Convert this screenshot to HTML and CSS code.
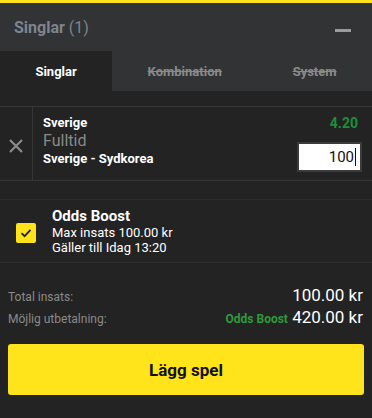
FILE: index.html
```html
<!DOCTYPE html>
<html lang="sv">
<head>
<meta charset="utf-8">
<link rel="stylesheet" href="styles.css">
</head>
<body>
<div class="slip">
  <div class="topbar"></div>
  <div class="header">
    <div class="title"><span class="title-main">Singlar</span> <span class="title-count">(1)</span></div>
    <div class="minus"></div>
  </div>
  <div class="tabs">
    <div class="tab active">Singlar</div>
    <div class="tab disabled">Kombination</div>
    <div class="tab disabled">System</div>
  </div>
  <div class="spacer"></div>
  <div class="bet">
    <div class="remove">
      <svg width="16" height="16" viewBox="0 0 16 16"><path d="M2 2 L14 14 M14 2 L2 14" stroke="#8b8b8b" stroke-width="2.2" fill="none"/></svg>
    </div>
    <div class="bet-body">
      <div class="bet-info">
        <div class="sel">Sverige</div>
        <div class="market">Fulltid</div>
        <div class="event">Sverige - Sydkorea</div>
      </div>
      <div class="bet-side">
        <div class="odds">4.20</div>
        <div class="stake"><span class="stake-val">100</span><span class="caret"></span></div>
      </div>
    </div>
  </div>
  <div class="spacer2"></div>
  <div class="boost">
    <div class="check">
      <svg width="14" height="14" viewBox="0 0 14 14"><path d="M2.5 7.2 L5.6 10.2 L11.5 3.8" stroke="#222" stroke-width="1.8" fill="none"/></svg>
    </div>
    <div class="boost-text">
      <div class="boost-title">Odds Boost</div>
      <div class="boost-line">Max insats 100.00 kr</div>
      <div class="boost-line">Gäller till Idag 13:20</div>
    </div>
  </div>
  <div class="totals">
    <div class="trow">
      <span class="tlabel">Total insats:</span>
      <span class="tval">100.00 kr</span>
    </div>
    <div class="trow">
      <span class="tlabel">Möjlig utbetalning:</span>
      <span class="tval"><span class="tboost">Odds Boost</span> 420.00 kr</span>
    </div>
  </div>
  <div class="actions">
    <button class="place">Lägg spel</button>
  </div>
</div>
</body>
</html>
```

FILE: styles.css
```css
html, body {
  margin: 0;
  padding: 0;
  background: #232323;
  font-family: Roboto, "Liberation Sans", Arial, sans-serif;
}
.slip {
  width: 372px;
  height: 418px;
  background: #232323;
  display: flex;
  flex-direction: column;
}
.topbar {
  height: 3px;
  background: #ffe31a;
}
.header {
  height: 48px;
  background: #323335;
  display: flex;
  align-items: center;
  justify-content: space-between;
  padding: 0 21px 0 14px;
}
.title {
  font-size: 16px;
  color: #7e858d;
}
.title-main {
  font-weight: 700;
}
.title-count {
  font-weight: 400;
}
.minus {
  width: 16px;
  height: 3px;
  background: #9b9b9b;
  margin-top: 6px;
}
.tabs {
  height: 40px;
  display: flex;
  background: #323335;
}
.tab {
  flex: 1 1 auto;
  display: flex;
  align-items: center;
  justify-content: center;
  font-size: 13px;
  font-weight: 700;
}
.tab.active {
  background: #232323;
  color: #ffffff;
}
.tab.disabled {
  color: #8a8a8a;
  text-decoration: line-through;
}
.spacer {
  height: 15px;
}
.bet {
  height: 73px;
  border-top: 1px solid #363636;
  border-bottom: 1px solid #363636;
  display: flex;
}
.remove {
  width: 33px;
  border-right: 1px solid #363636;
  display: flex;
  align-items: center;
  justify-content: center;
  padding-top: 5px;
  box-sizing: border-box;
}
.bet-body {
  flex: 1;
  display: flex;
  justify-content: space-between;
  padding: 8px 10px 0 10px;
}
.sel, .event {
  font-size: 13px;
  font-weight: 700;
  color: #ffffff;
  line-height: 16px;
}
.market {
  font-size: 16px;
  color: #8a8a8a;
  line-height: 20px;
}
.bet-side {
  display: flex;
  flex-direction: column;
  align-items: flex-end;
}
.odds {
  font-size: 14px;
  font-weight: 700;
  color: #1c8f3b;
  line-height: 16px;
  margin-right: 4px;
}
.stake {
  margin-top: 11px;
  width: 65px;
  height: 30px;
  box-sizing: border-box;
  border: 2px solid #3b3b3b;
  background: #ffffff;
  display: flex;
  align-items: center;
  justify-content: flex-end;
  padding-right: 4px;
  font-size: 15px;
  color: #111;
}
.caret {
  width: 1px;
  height: 18px;
  background: #111;
  margin-left: 1px;
}
.spacer2 {
  height: 18px;
  border-bottom: 1px solid #2c2c2c;
}
.boost {
  height: 62px;
  border-bottom: 1px solid #2c2c2c;
  display: flex;
  align-items: center;
  padding-left: 16px;
}
.check {
  width: 20px;
  height: 20px;
  background: #ffe31a;
  border-radius: 2px;
  display: flex;
  align-items: center;
  justify-content: center;
  margin-right: 16px;
  margin-top: 3px;
}
.boost-title {
  font-size: 15px;
  font-weight: 700;
  color: #fff;
  line-height: 17px;
}
.boost-line {
  font-size: 13px;
  color: #fff;
  line-height: 15px;
}
.totals {
  padding: 22px 9px 0 8px;
}
.trow {
  display: flex;
  justify-content: space-between;
  align-items: baseline;
  height: 22px;
}
.tlabel {
  font-size: 12px;
  color: #8a8a8a;
}
.tval {
  font-size: 17px;
  color: #fff;
}
.tboost {
  font-size: 12px;
  font-weight: 700;
  color: #2e9b3a;
}
.actions {
  padding: 15px 8px 0 8px;
}
.place {
  width: 100%;
  height: 51px;
  border: none;
  border-radius: 3px;
  background: #ffe41c;
  color: #111;
  font-family: Roboto, "Liberation Sans", Arial, sans-serif;
  font-size: 17px;
  font-weight: 700;
}
```
